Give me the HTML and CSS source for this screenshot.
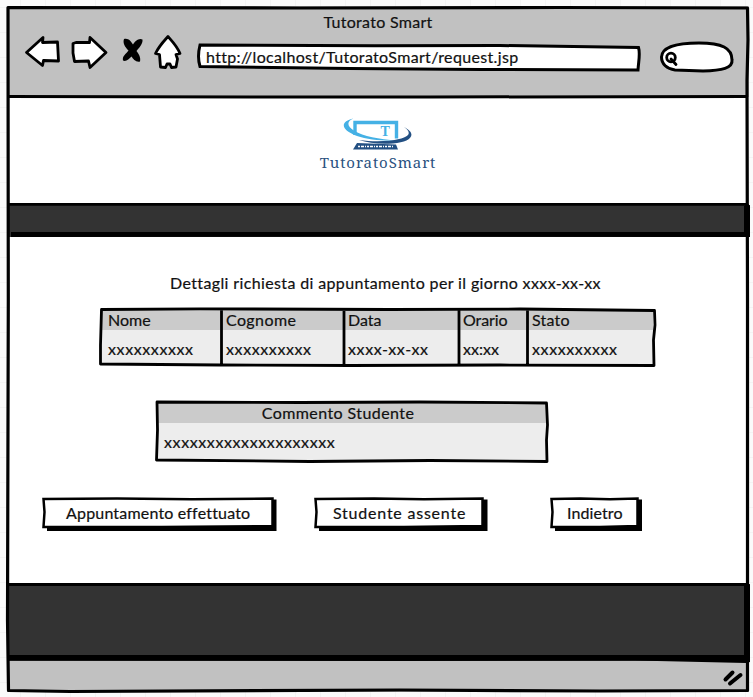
FILE: index.html
```html
<!DOCTYPE html>
<html lang="it">
<head>
<meta charset="utf-8">
<title>Tutorato Smart</title>
<link rel="stylesheet" href="styles.css">
</head>
<body>
<div class="window">
  <header class="toolbar">
    <div class="title"><span class="t-title">Tutorato Smart</span></div>
    <div class="controls">
      <svg class="nav-icons" width="160" height="40" viewBox="22 32 160 40">
        <g fill="#fff" stroke="#000" stroke-width="2.8" stroke-linejoin="round">
          <path d="M26.5 52.5 43 37.5 42.5 42.5 57.5 42 58.5 61 43.5 60.5 42.5 65.5Z"/>
          <path d="M73 43.5 76 42.5 89.5 42.5 90 37.5 106 52.5 90 67.5 88.5 61 74.5 61.5 73 53Z"/>
          <path d="M168 36.5C172 41 177 46 180 53.5L176 54.5 177.5 59 176 67 171.5 67.5 170 64 167 64 165.5 67.5 160.5 67 159.5 54.5 155.5 53.5C159 46 164 41 168 36.5Z"/>
        </g>
        <path d="M124 39C128 37.5 131 41 133 44.5C135 41 139 37.5 142.5 39.5C143 44 139 48 136.5 51C139 54 141 58 140 61.5C136 62.5 133 59 131.5 56.5C129 59 126 62 123 60.5C122 56 126 54 128.5 50.5C125 47 122.5 43 124 39Z"/>
      </svg>
      <div class="address">
        <svg class="sketch" width="444" height="29" viewBox="197 43 444 29"><path d="M200 45 375 45.8 500 45.5 638.5 47.5C640.5 54 638.5 61 638 70L480 69.5 350 68.5 200 66.5C198 60 198 53 200 45Z" fill="#fff" stroke="#000" stroke-width="3"/></svg>
        <span class="t-url">http://localhost/TutoratoSmart/request.jsp</span>
      </div>
      <svg class="search" width="76" height="32" viewBox="659 41 76 32">
        <path d="M661.5 57C662 47 676 43 699 43C722 43 732 48 732 60C733 68 722 70.5 703 71L675 70C667 69 661.5 64 661.5 57Z" fill="#fff" stroke="#000" stroke-width="3"/>
        <circle cx="671" cy="57.5" r="4.3" fill="none" stroke="#000" stroke-width="2.8"/>
        <path d="M671 59 676 64.5" stroke="#000" stroke-width="2.8" stroke-linecap="round"/>
      </svg>
    </div>
  </header>
  <div class="brand">
    <svg width="72" height="34" viewBox="342 118 72 34">
      <path d="M355 136V123.5H396.5V139.5" fill="none" stroke="#45b1e5" stroke-width="3.4"/>
      <path d="M353.5 119.5C340 122 340 131 357 137C367 140.5 381 142 397 141.5C379 140.5 363 137 354.5 132C346 127 347 122 353.5 119.5Z" fill="#45b1e5"/>
      <path d="M404 128C418 135 411 143 393 144.5C380 145.5 368 144 359 141C374 143 389 142.5 399 140C411 137 411 133 404 128Z" fill="#235083"/>
      <path d="M357 144 396 145.5 398 150.5H353Z" fill="#235083"/>
      <path d="M358 147.5H393" stroke="#fff" stroke-width="1.5" stroke-dasharray="2 1 3 1 1 1"/>
      <text class="logo-t" x="380.5" y="137">T</text>
    </svg>
    <span class="t-brand">TutoratoSmart</span>
  </div>
  <div class="band"></div>
  <main>
    <h1><span class="t-heading">Dettagli richiesta di appuntamento per il giorno xxxx-xx-xx</span></h1>
    <div class="grid details">
      <div class="col"><div class="th"><span class="t-nome">Nome</span></div><div class="td">xxxxxxxxxx</div></div>
      <div class="col"><div class="th"><span class="t-cognome">Cognome</span></div><div class="td">xxxxxxxxxx</div></div>
      <div class="col"><div class="th"><span class="t-data">Data</span></div><div class="td date">xxxx-xx-xx</div></div>
      <div class="col"><div class="th"><span class="t-orario">Orario</span></div><div class="td time">xx:xx</div></div>
      <div class="col"><div class="th"><span class="t-stato">Stato</span></div><div class="td">xxxxxxxxxx</div></div>
      <svg class="sketch" width="559" height="60" viewBox="98 307 559 60"><path d="M101.5 309.5 200 308.8 390 309.5 520 309 654.5 310.5 655 325 653.5 340 654 365.5 500 365 350 365.5 220 365 100.5 364 100.5 345ZM221.5 309V366M344 309V366M459 309V366M527.5 309V366" fill="none" stroke="#000" stroke-width="2.8" stroke-linejoin="round"/></svg>
    </div>
    <div class="grid comment">
      <div class="th"><span class="t-comment">Commento Studente</span></div>
      <div class="td">xxxxxxxxxxxxxxxxxxxx</div>
      <svg class="sketch" width="394" height="64" viewBox="155 399 394 64"><path d="M157 402 300 402.5 420 402 546.5 403 547.5 425 546.5 440 547 461.5 430 460.5 310 461.5 156.5 460 157.5 430Z" fill="none" stroke="#000" stroke-width="2.8" stroke-linejoin="round"/></svg>
    </div>
    <div class="actions">
      <button class="b-done"><svg class="sketch" width="236" height="36" viewBox="0 0 236 36"><path d="M5 30H230V2.5H234.5V34H5Z"/><path d="M1.5 2 75 1.5 150 2.2 230.5 1.5V29L120 30 1.5 30 2.5 15Z" fill="#fff" stroke="#000" stroke-width="2.5"/></svg><span class="t-done">Appuntamento effettuato</span></button>
      <button class="b-absent"><svg class="sketch" width="175" height="36" viewBox="0 0 175 36"><path d="M5 30H168V2.5H173.5V34H5Z"/><path d="M1.5 2 60 1.5 110 2.2 168.5 1.5V29L90 30 1.5 30 2.5 15Z" fill="#fff" stroke="#000" stroke-width="2.5"/></svg><span class="t-absent">Studente assente</span></button>
      <button class="b-back"><svg class="sketch" width="93" height="36" viewBox="0 0 93 36"><path d="M5 30H87V2.5H92V34H5Z"/><path d="M1.5 2 30 1.5 60 2.2 87.5 1.5V29L50 30 1.5 30 2.5 15Z" fill="#fff" stroke="#000" stroke-width="2.5"/></svg><span class="t-back">Indietro</span></button>
    </div>
  </main>
  <div class="band foot"></div>
  <div class="status">
    <svg width="22" height="18" viewBox="722 669 22 18"><path d="M725.5 679.5 732.5 672.5M730 683.5 740.5 675" stroke="#000" stroke-width="4" stroke-linecap="round"/></svg>
  </div>
  <svg class="frame" width="746" height="690" viewBox="5 4 746 690">
    <path d="M8 7.5 300 8 560 7.5 747.5 8 748 40 747 80 747.5 300 747.5 690.5 600 691 400 690 70 691.5 8.5 690.5 7.5 620 8.3 300Z" fill="none" stroke="#000" stroke-width="3.2" stroke-linejoin="round"/>
    <path d="M8 96.5 250 97 430 97 747 96.5" fill="none" stroke="#000" stroke-width="3"/>
    <path d="M11 237 400 236.5 750 237V205L744 206V232H11ZM9 203H746V205.8H9ZM9 583H746V586H9ZM9 655H744V585L750 584V662L746 663 635 660.5 400 661 9 660.5Z"/>
  </svg>
</div>
</body>
</html>
```

FILE: styles.css
```css
* { box-sizing: border-box; }

body {
  margin: 0;
  height: 697px;
  padding: 6px 4px 4px 7px;
  overflow: hidden;
  color: #111;
  font: 16px/20px Lato, "Liberation Sans", sans-serif;
  font-variant-ligatures: none;
  -webkit-text-stroke: 0.2px;
  background-color: #fafafa;
  background-image:
    linear-gradient(#f3f3f3 1px, transparent 1px),
    linear-gradient(90deg, #f3f3f3 1px, transparent 1px);
  background-size: 25px 25px;
  background-position: 20px 7px;
}

.window {
  position: relative;
  display: flex;
  flex-direction: column;
  width: 742px;
  height: 686px;
  background: #fff;
}

.frame { position: absolute; left: -2px; top: -2px; pointer-events: none; }
.sketch { position: absolute; left: 0; top: 0; }
span { position: relative; white-space: nowrap; }

.toolbar { height: 91px; background: #c1c1c1; }
.title { height: 35px; padding-top: 6px; text-align: center; }
.controls { display: flex; align-items: flex-start; padding: 0 14px 0 15px; }
.nav-icons { margin-top: -9px; }
.address { position: relative; width: 444px; height: 29px; margin: 2px 18px 0 15px; padding: 4px 0 0 9px; }
.t-title { letter-spacing: 0.3px; }
.t-url { letter-spacing: 0.34px; }

.brand { display: flex; flex-direction: column; align-items: center; height: 107px; padding: 20px 0 0 0; }
.brand svg { margin-right: 1px; }
.t-brand { margin-top: 1px; font: 15px/20px "Noto Serif", "DejaVu Serif", serif; letter-spacing: 0.9px; color: #2a527f; -webkit-text-stroke: 0; }
.logo-t { font: bold 14px "Liberation Serif", serif; fill: #45b1e5; }

.band { height: 33px; background: #333; }
.foot { height: 78px; }
.status { display: flex; flex: 1; justify-content: flex-end; align-items: flex-end; padding: 0 5px 5px 0; background: #c1c1c1; }

main { height: 346px; }
h1 { margin: 0; padding: 36px 0 0 163px; font: inherit; }
.t-heading { letter-spacing: 0.37px; }

.grid { position: relative; background: #ededed content-box; }
.th { height: 21px; padding-top: 1px; background: #cbcbcb; }
.td { padding-top: 9px; letter-spacing: 0.6px; }
.date { letter-spacing: 0.6px; }
.time { letter-spacing: 0; }
.details { display: grid; grid-template-columns: 120px 122px 115px 69px 126px; width: 559px; height: 60px; margin: 14px 0 0 91px; padding: 2px 4px 2px 3px; }
.col .th, .col .td { padding-left: 5px; }
.col:first-child .th, .col:first-child .td { padding-left: 7px; }
.t-cognome { letter-spacing: 0.4px; }
.t-orario { letter-spacing: -0.1px; }
.t-stato { letter-spacing: 0.2px; }
.comment { width: 394px; height: 64px; margin: 32px 0 0 148px; padding: 3px; }
.comment .th { padding-right: 28px; text-align: center; }
.comment .td { padding-left: 6px; }
.t-comment { letter-spacing: 0.42px; }

.actions { display: flex; align-items: flex-start; margin: 34px 0 0 35px; }
button { position: relative; height: 36px; padding: 0 0 5px; border: 0; background: none; color: inherit; font: inherit; text-align: left; }
.b-done { width: 236px; padding-left: 24px; }
.b-absent { width: 175px; margin-left: 36px; padding-left: 19px; }
.b-back { width: 93px; margin-left: 61px; padding-left: 17px; }
.t-done { letter-spacing: 0.18px; }
.t-absent { letter-spacing: 0.78px; }
.t-back { letter-spacing: 0.1px; }
```
